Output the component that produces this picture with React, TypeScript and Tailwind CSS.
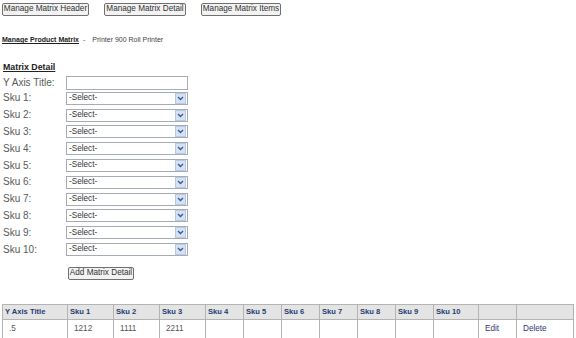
import React from "react";

const skus = ["Sku 1", "Sku 2", "Sku 3", "Sku 4", "Sku 5", "Sku 6", "Sku 7", "Sku 8", "Sku 9", "Sku 10"];

function Btn({ label, w }: { label: string; w: string }) {
  return (
    <button className={`${w} h-[13px] flex items-center justify-center border border-[#707070] rounded-[2px] bg-[#f2f2f2] text-[8.2px] leading-none text-[#333]`}>
      {label}
    </button>
  );
}

function FakeSelect() {
  return (
    <div className="w-[122px] h-[13px] border border-[#a5acb5] bg-white flex items-center">
      <span className="flex-1 pl-[2px] text-[8.2px] leading-none text-[#333]">-Select-</span>
      <span className="w-[11px] h-[11px] mr-px bg-[#d6e2f4] border border-[#b8c9e4] flex items-center justify-center">
        <svg width="7" height="5" viewBox="0 0 7 5">
          <path d="M1 1 L3.5 3.5 L6 1" stroke="#3c5a96" strokeWidth="1.4" fill="none" />
        </svg>
      </span>
    </div>
  );
}

const cols = [
  { h: "Y Axis Title", w: "w-[65px]", v: ".5" },
  { h: "Sku 1", w: "w-[46px]", v: "1212" },
  { h: "Sku 2", w: "w-[46px]", v: "1111" },
  { h: "Sku 3", w: "w-[46px]", v: "2211" },
  { h: "Sku 4", w: "w-[38px]", v: "" },
  { h: "Sku 5", w: "w-[38px]", v: "" },
  { h: "Sku 6", w: "w-[38px]", v: "" },
  { h: "Sku 7", w: "w-[38px]", v: "" },
  { h: "Sku 8", w: "w-[38px]", v: "" },
  { h: "Sku 9", w: "w-[38px]", v: "" },
  { h: "Sku 10", w: "w-[45px]", v: "" },
  { h: "", w: "w-[38px]", v: "Edit" },
  { h: "", w: "w-[57px]", v: "Delete" },
];

export default function App() {
  return (
    <div className="w-[576px] h-[338px] bg-white overflow-hidden font-['Liberation_Sans',Arial,sans-serif] text-[#333]">
      <div className="flex gap-[15px] pl-[2px] pt-[3px]">
        <Btn label="Manage Matrix Header" w="w-[87px]" />
        <Btn label="Manage Matrix Detail" w="w-[82px]" />
        <Btn label="Manage Matrix Items" w="w-[80px]" />
      </div>

      <div className="mt-[19px] pl-[2px] flex items-baseline text-[7px] leading-[10px]">
        <span className="font-bold underline text-[#222]">Manage Product Matrix</span>
        <span className="ml-[4px] text-[#444]">-</span>
        <span className="ml-[7px] text-[#444]">Printer 900 Roll Printer</span>
      </div>

      <div className="mt-[17px] pl-[3px] text-[8.8px] leading-[11px] font-bold underline text-[#222]">Matrix Detail</div>

      <div className="pl-[3px] mt-[2px]">
        <div className="flex items-center h-[15px]">
          <span className="w-[63px] text-[10px] leading-none text-[#5a5a5a]">Y Axis Title:</span>
          <div className="w-[122px] h-[14px] border border-[#a5acb5] bg-white" />
        </div>
        {skus.map((s) => (
          <div key={s} className="flex items-center h-[16.8px]">
            <span className="w-[63px] text-[10px] leading-none text-[#5a5a5a]">{s}:</span>
            <FakeSelect />
          </div>
        ))}
      </div>

      <div className="pl-[68px] mt-[9px]">
        <Btn label="Add Matrix Detail" w="w-[66px]" />
      </div>

      <table className="mt-[24px] ml-[2px] w-[572px] table-fixed border-collapse border border-[#9a9a9a]">
        <thead>
          <tr className="h-[15px] bg-[#e4e4e4]">
            {cols.map((c, i) => (
              <th key={i} className={`${c.w} border border-[#b4b4b4] px-[2px] text-left text-[7.6px] leading-none font-bold text-[#1e3f73]`}>
                {c.h}
              </th>
            ))}
          </tr>
        </thead>
        <tbody>
          <tr className="h-[20px]">
            {cols.map((c, i) => (
              <td
                key={i}
                className={`border border-[#b4b4b4] pl-[6px] text-[8.2px] leading-none ${i >= 11 ? "text-[#33387a]" : "text-[#555]"}`}
              >
                {c.v}
              </td>
            ))}
          </tr>
        </tbody>
      </table>
    </div>
  );
}
